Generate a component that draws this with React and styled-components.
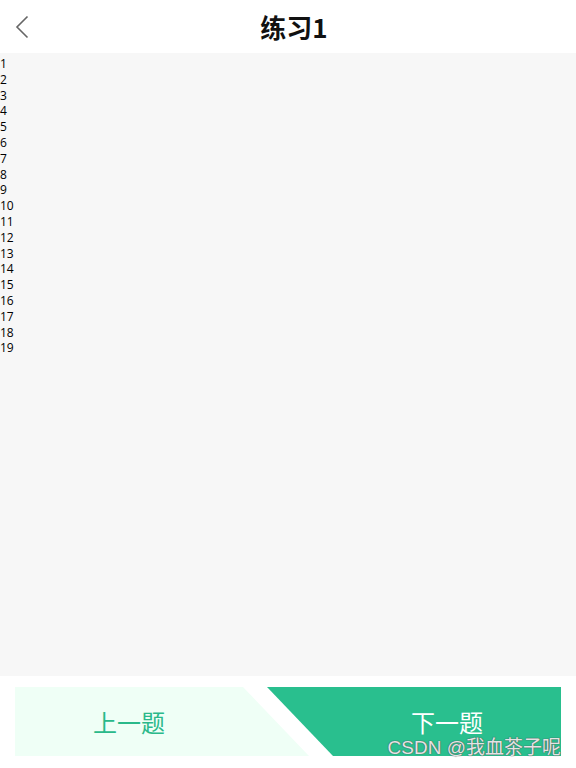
import React from "react";
import styled, { createGlobalStyle } from "styled-components";

const Global = createGlobalStyle`
  html, body { margin: 0; padding: 0; background: #ffffff; }
  body { font-family: "Noto Sans", "Noto Sans CJK SC", sans-serif; }
`;

const Page = styled.div`
  position: relative;
  width: 576px;
  height: 768px;
  display: flex;
  flex-direction: column;
  background: #ffffff;
  overflow: hidden;
`;

const Header = styled.header`
  height: 53px;
  flex: none;
  display: flex;
  align-items: center;
  padding: 0 0 0 12px;
  background: #ffffff;
`;

const BackButton = styled.button`
  width: 20px;
  height: 30px;
  padding: 0;
  border: 0;
  background: none;
  display: flex;
  align-items: center;
  justify-content: center;
  cursor: pointer;
`;

const Title = styled.h1`
  flex: 1;
  margin: 0;
  padding-right: 20px;
  text-align: center;
  font-family: "Noto Sans CJK SC", "Noto Sans", sans-serif;
  font-size: 26px;
  font-weight: 700;
  color: #111111;
  line-height: 32px;
`;

const Content = styled.main`
  flex: 1;
  background: #f7f7f7;
  padding-top: 3px;
`;

const Line = styled.div`
  font-family: "Open Sans", "Noto Sans", sans-serif;
  font-size: 12px;
  line-height: 15.8px;
  color: #000000;
`;

const Footer = styled.footer`
  height: 92px;
  flex: none;
  display: flex;
  padding: 11px 15px 12px;
  box-sizing: border-box;
  background: #ffffff;
`;

const NavButton = styled.button`
  flex: 1;
  border: 0;
  margin: 0;
  height: 69px;
  display: flex;
  align-items: center;
  justify-content: center;
  font-family: "Noto Sans CJK SC", sans-serif;
  font-size: 24px;
  font-weight: 400;
  cursor: pointer;
  background: ${(p) => (p.$primary ? "#29bf8e" : "#effff6")};
  color: ${(p) => (p.$primary ? "#ffffff" : "#2ab98a")};
  padding: ${(p) => (p.$primary ? "0 0 0 66px" : "0 66px 0 0")};
  margin-left: ${(p) => (p.$primary ? "-42px" : "0")};
  clip-path: ${(p) =>
    p.$primary
      ? "polygon(0 0, 100% 0, 100% 100%, 66px 100%)"
      : "polygon(0 0, calc(100% - 66px) 0, 100% 100%, 0 100%)"};
`;

const Watermark = styled.div`
  position: absolute;
  right: 15px;
  bottom: 9px;
  font-family: "Liberation Sans", "Noto Sans CJK SC", sans-serif;
  font-size: 19px;
  line-height: 22px;
  color: rgba(255, 255, 255, 0.85);
  text-shadow: 0 0 1px #555, 0 0 1px #555;
  pointer-events: none;
`;

export default function App() {
  const lines = Array.from({ length: 19 }, (_, i) => i + 1);
  return (
    <Page>
      <Global />
      <Header>
        <BackButton aria-label="返回">
          <svg width="14" height="24" viewBox="0 0 14 24" fill="none">
            <path d="M12.5 1.5 L2 12 L12.5 22.5" stroke="#666" strokeWidth="1.6" />
          </svg>
        </BackButton>
        <Title>练习1</Title>
      </Header>
      <Content>
        {lines.map((n) => (
          <Line key={n}>{n}</Line>
        ))}
      </Content>
      <Footer>
        <NavButton>上一题</NavButton>
        <NavButton $primary>下一题</NavButton>
      </Footer>
      <Watermark>CSDN @我血茶子呢</Watermark>
    </Page>
  );
}
